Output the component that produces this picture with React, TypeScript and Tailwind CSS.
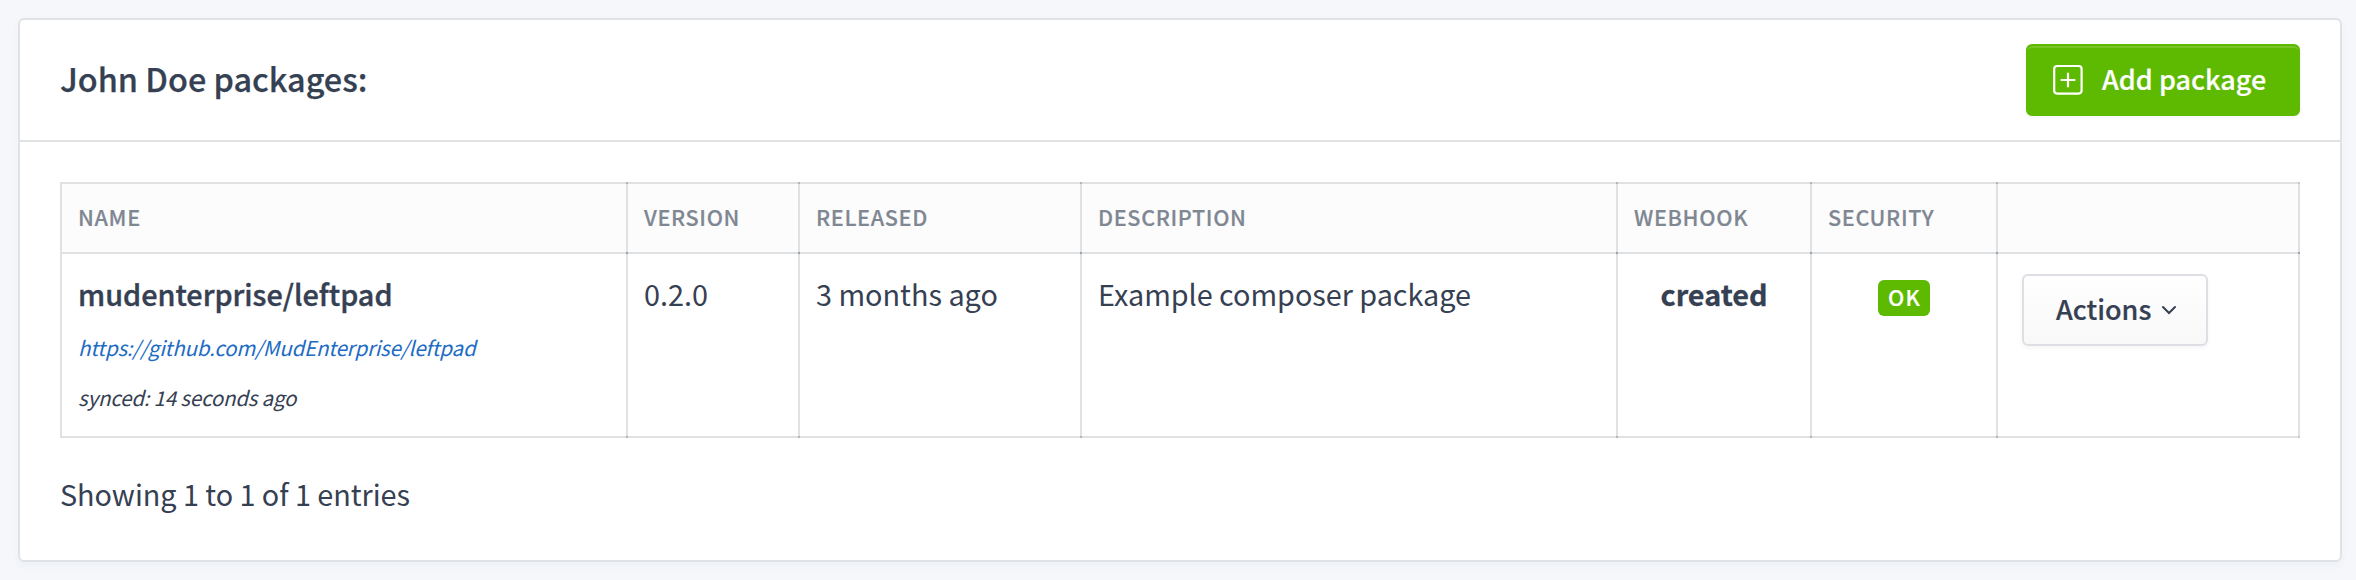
import type { ReactNode } from "react";

const columns = [
  { label: "Name", width: "w-[566px]" },
  { label: "Version", width: "w-[172px]" },
  { label: "Released", width: "w-[282px]" },
  { label: "Description", width: "w-[536px]" },
  { label: "Webhook", width: "w-[194px]" },
  { label: "Security", width: "w-[186px]" },
  { label: "", width: "w-[302px]" },
];

const line = "relative border-2 border-[#e0e1e3]";

// Darker joints where the grid lines cross
const topJoint =
  "before:absolute before:-top-0.5 before:-right-0.5 before:size-0.5 before:bg-[#b1b5bc] last:before:bg-[#c6c9ce]";
const bottomJoint = "after:absolute after:-right-0.5 after:-bottom-0.5 after:size-0.5";

function Cell({ children, className = "" }: { children?: ReactNode; className?: string }) {
  return (
    <td
      className={`${line} ${bottomJoint} px-4 pt-[15px] align-top leading-[50px] after:bg-[#b1b5bc] last:after:bg-[#c6c9ce] ${className}`}
    >
      {children}
    </td>
  );
}

function PlusIcon() {
  return (
    <svg className="size-8" viewBox="0 0 32 32" fill="none" stroke="currentColor" strokeWidth="2.2" strokeLinecap="round">
      <rect x="2.2" y="2" width="27.4" height="27.6" rx="3" />
      <path d="M16 9.5v13M9.5 16h13" />
    </svg>
  );
}

export default function App() {
  return (
    <div className="h-[580px] bg-[#f5f7fb] px-4 pt-[18px] font-['Noto_Sans_CJK_SC',sans-serif] text-[28.8px] text-[#354052]">
      <section className="ml-0.5 flex h-[544px] w-[2324px] flex-col rounded-[6px] border-2 border-[#e0e2e5] bg-white shadow-[0_4px_8px_rgba(53,64,82,0.04)]">
        <header className="flex h-[122px] items-center justify-between border-b-2 border-[#e0e1e3] px-10">
          <h1 className="pb-[3px] text-[32.4px] leading-none font-medium [-webkit-text-stroke:0.25px_currentColor]">
            John Doe packages:
          </h1>
          <button className="flex h-[72px] w-[274px] items-center rounded-[6px] border-2 border-[#5eba00] bg-[#5eba00] pl-6 text-[27px] leading-none font-medium text-white shadow-[inset_0_2px_0_rgba(255,255,255,0.15),0_2px_4px_rgba(53,64,82,0.05)] [-webkit-text-stroke:0.2px_currentColor]">
            <PlusIcon />
            <span className="ml-[18px] pb-[3px]">Add package</span>
          </button>
        </header>
        <div className="px-10 pt-10">
          <table className="w-[2240px] table-fixed border-collapse text-left">
            <colgroup>
              {columns.map((c, i) => (
                <col key={i} className={c.width} />
              ))}
            </colgroup>
            <thead>
              <tr className="h-[70px] bg-[#fcfcfc]">
                {columns.map((c, i) => (
                  <th
                    key={i}
                    className={`${line} ${topJoint} ${bottomJoint} p-0 px-4 pb-0.5 align-middle text-[21.6px] leading-none font-medium tracking-[0.65px] text-[#7f8793] uppercase [-webkit-text-stroke:0.2px_currentColor] after:bg-[#9da3ad]`}
                  >
                    {c.label}
                  </th>
                ))}
              </tr>
            </thead>
            <tbody>
              <tr className="h-[184px]">
                <Cell>
                  <div className="font-medium [-webkit-text-stroke:0.4px_currentColor]">mudenterprise/leftpad</div>
                  <a className="mt-[3px] block text-[20.5px] tracking-[-0.19px] text-[#206bc4] italic">
                    https://github.com/MudEnterprise/leftpad
                  </a>
                  <div className="text-[20.5px] tracking-[-0.19px] italic">synced: 14 seconds ago</div>
                </Cell>
                <Cell>0.2.0</Cell>
                <Cell>3 months ago</Cell>
                <Cell className="tracking-[-0.03px]">Example composer package</Cell>
                <Cell className="text-center font-bold [-webkit-text-stroke:0.3px_currentColor]">created</Cell>
                <Cell>
                  <div className="mx-auto mt-[11px] flex h-9 w-[52px] justify-center rounded-[6px] bg-[#5eba00] pl-px text-[21.6px] leading-[34px] font-medium tracking-[1.2px] text-white [-webkit-text-stroke:0.2px_currentColor]">
                    OK
                  </div>
                </Cell>
                <Cell>
                  <button className="mt-[5px] ml-2 flex h-[72px] w-[186px] items-center rounded-[6px] border-2 border-[#dddfe4] bg-linear-to-b from-white to-[#f8f8f8] pl-8 text-[27px] leading-none font-medium shadow-[0_2px_4px_rgba(53,64,82,0.05)] [-webkit-text-stroke:0.2px_currentColor]">
                    <span className="pb-[3px]">Actions</span>
                    <svg className="ml-[10px] h-3 w-4" viewBox="0 0 16 12" fill="none" stroke="currentColor" strokeWidth="2" strokeLinecap="round">
                      <path d="M2 3l6 6 6-6" />
                    </svg>
                  </button>
                </Cell>
              </tr>
            </tbody>
          </table>
          <p className="mt-8 leading-[48px] tracking-[-0.04px]">Showing 1 to 1 of 1 entries</p>
        </div>
      </section>
    </div>
  );
}
